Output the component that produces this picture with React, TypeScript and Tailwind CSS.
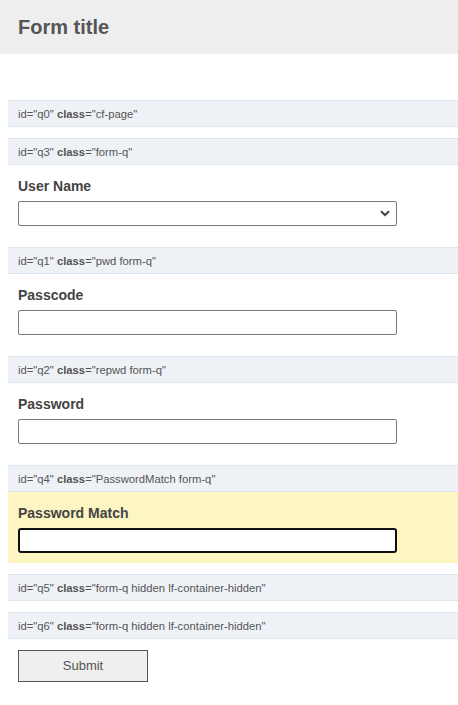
import React from "react";

function Bar({ id, cls }: { id: string; cls: string }) {
  return (
    <div className="ml-2 h-[27px] border-y border-[#dbe6ef] bg-[#eef2f6] pl-[10px] text-[11.25px] leading-[26px] text-[#555]">
      id="{id}" <b>class</b>="{cls}"
    </div>
  );
}

function Field({ label, children, yellow }: { label: string; children: React.ReactNode; yellow?: boolean }) {
  return (
    <div className={`ml-2 px-[10px] pt-[11px] pb-[10px] ${yellow ? "bg-[#fdf5c2]" : ""}`}>
      <div className="h-[20px] text-[14px] font-bold leading-[20px] text-[#444]">{label}</div>
      <div className="mt-[5px]">{children}</div>
    </div>
  );
}

export default function App() {
  return (
    <div className="min-h-[705px] bg-white" style={{ fontFamily: '"Liberation Sans", Arial, sans-serif' }}>
      <div className="flex h-[54px] items-center bg-[#eeeeee] pl-[18px] pb-[1px]">
        <h1 className="text-[20px] font-bold text-[#555]">Form title</h1>
      </div>
      <div className="mt-[46px] flex flex-col">
        <Bar id="q0" cls="cf-page" />
        <div className="mt-[11px]" />
        <Bar id="q3" cls="form-q" />
        <Field label="User Name">
          <div className="relative h-[25px] w-[379px] rounded-[2px] border border-[#767676] bg-white">
            <svg className="absolute right-[6px] top-[8px]" width="10" height="7" viewBox="0 0 10 7">
              <path d="M1 1.2 L5 5 L9 1.2" fill="none" stroke="#444" strokeWidth="2" />
            </svg>
          </div>
        </Field>
        <div className="mt-[11px]" />
        <Bar id="q1" cls="pwd form-q" />
        <Field label="Passcode">
          <div className="h-[25px] w-[379px] rounded-[2px] border border-[#767676] bg-white" />
        </Field>
        <div className="mt-[11px]" />
        <Bar id="q2" cls="repwd form-q" />
        <Field label="Password">
          <div className="h-[25px] w-[379px] rounded-[2px] border border-[#767676] bg-white" />
        </Field>
        <div className="mt-[11px]" />
        <Bar id="q4" cls="PasswordMatch form-q" />
        <Field label="Password Match" yellow>
          <div className="h-[25px] w-[379px] rounded-[3px] border-2 border-[#101010] bg-white" />
        </Field>
        <div className="mt-[11px]" />
        <Bar id="q5" cls="form-q hidden lf-container-hidden" />
        <div className="mt-[11px]" />
        <Bar id="q6" cls="form-q hidden lf-container-hidden" />
        <div className="ml-[18px] mt-[11px]">
          <button className="h-[32px] w-[130px] border border-[#555] bg-[#efefef] text-[13px] text-[#555]">
            Submit
          </button>
        </div>
      </div>
    </div>
  );
}
